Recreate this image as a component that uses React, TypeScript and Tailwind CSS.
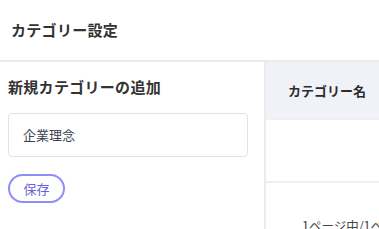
export default function App() {
  return (
    <div
      className="w-[379px] h-[229px] overflow-hidden bg-white text-[#333]"
      style={{ fontFamily: '"Noto Sans CJK JP", "Noto Sans", sans-serif' }}
    >
      {/* Page title */}
      <div className="h-[62px] flex items-center px-[11px] border-b-2 border-[#ebebeb]">
        <h1 className="text-[15px] font-semibold tracking-[0.3px]">カテゴリー設定</h1>
      </div>

      <div className="flex h-[167px]">
        {/* Left: add form */}
        <div className="w-[266px] shrink-0 border-r-2 border-[#ebebeb] px-2">
          <div className="h-[51px] flex items-center">
            <h2 className="text-[15px] font-bold tracking-[0.3px]">新規カテゴリーの追加</h2>
          </div>
          <div className="w-[240px] h-[44px] border border-[#e2e2e2] rounded flex items-center px-[14px] text-[13px] text-[#3a4150]">
            企業理念
          </div>
          <button className="mt-[17px] h-[29px] w-[57px] rounded-full border-2 border-[#8e8ef5] text-[13px] text-[#6666d8] flex items-center justify-center">
            保存
          </button>
        </div>

        {/* Right: table */}
        <div className="flex-1">
          <div className="h-[58px] bg-[#f1f2f8] flex items-center pl-[22px] border-b border-[#eceef4]">
            <span className="text-[13px] font-bold text-[#2b2b2b]">カテゴリー名</span>
          </div>
          <div className="h-[63px] border-b-2 border-[#efefef]" />
          <div className="pl-[36px] pt-[34px] text-[12.5px] text-[#444] whitespace-nowrap">
            1ページ中/1ページ
          </div>
        </div>
      </div>
    </div>
  );
}
